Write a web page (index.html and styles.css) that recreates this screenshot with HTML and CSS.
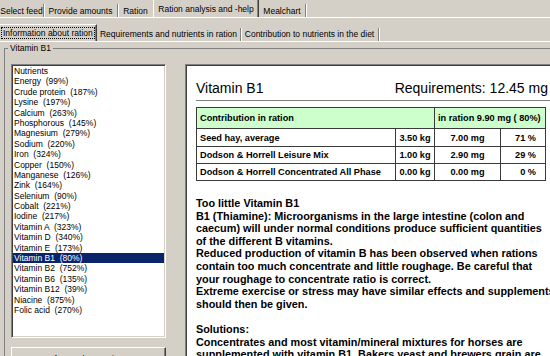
FILE: index.html
```html
<!DOCTYPE html>
<html>
<head>
<meta charset="utf-8">
<title>Ration analysis</title>
<link rel="stylesheet" href="styles.css">
</head>
<body>
<div class="app">
  <div class="tabs top">
    <div class="tab t1">Select feed</div>
    <div class="tab t2">Provide amounts</div>
    <div class="tab t3">Ration</div>
    <div class="tab sel t4">Ration analysis and -help</div>
    <div class="tab t5">Mealchart</div>
  </div>
  <div class="tabs sub">
    <div class="tab sel s1"><span class="focus">Information about ration</span></div>
    <div class="tab s2">Requirements and nutrients in ration</div>
    <div class="tab s3">Contribution to nutrients in the diet</div>
  </div>
  <fieldset class="group">
    <legend>Vitamin B1</legend>
    <div class="inner">
      <div class="left">
        <ul class="list">
          <li>Nutrients</li>
          <li>Energy  (99%)</li>
          <li>Crude protein  (187%)</li>
          <li>Lysine  (197%)</li>
          <li>Calcium  (263%)</li>
          <li>Phosphorous  (145%)</li>
          <li>Magnesium  (279%)</li>
          <li>Sodium  (220%)</li>
          <li>Iron  (324%)</li>
          <li>Copper  (150%)</li>
          <li>Manganese  (126%)</li>
          <li>Zink  (164%)</li>
          <li>Selenium  (90%)</li>
          <li>Cobalt  (221%)</li>
          <li>Iodine  (217%)</li>
          <li>Vitamin A  (323%)</li>
          <li>Vitamin D  (340%)</li>
          <li>Vitamin E  (173%)</li>
          <li class="on">Vitamin B1  (80%)</li>
          <li>Vitamin B2  (752%)</li>
          <li>Vitamin B6  (135%)</li>
          <li>Vitamin B12  (39%)</li>
          <li>Niacine  (875%)</li>
          <li>Folic acid  (270%)</li>
        </ul>
        <button class="btn">Info on other nutrients</button>
      </div>
      <div class="panel">
        <div class="doc">
          <div class="title"><span>Vitamin B1</span><span>Requirements: 12.45 mg</span></div>
          <div class="rule"></div>
          <table class="contrib">
            <colgroup><col class="c1"><col class="c2"><col class="c3"><col class="c4"></colgroup>
            <tr class="head"><td colspan="2">Contribution in ration</td><td colspan="2">in ration 9.90 mg ( 80%)</td></tr>
            <tr class="r1"><td>Seed hay, average</td><td class="ctr">3.50 kg</td><td class="ctr">7.00 mg</td><td class="pct">71 %</td></tr>
            <tr><td>Dodson &amp; Horrell Leisure Mix</td><td class="ctr">1.00 kg</td><td class="ctr">2.90 mg</td><td class="pct">29 %</td></tr>
            <tr><td>Dodson &amp; Horrell Concentrated All Phase</td><td class="ctr">0.00 kg</td><td class="ctr">0.00 mg</td><td class="pct">0 %</td></tr>
          </table>
          <p class="info">Too little Vitamin B1<br>B1 (Thiamine): Microorganisms in the large intestine (colon and<br>caecum) will under normal conditions produce sufficient quantities<br>of the different B vitamins.<br>Reduced production of vitamin B has been observed when rations<br>contain too much concentrate and little roughage. Be careful that<br>your roughage to concentrate ratio is correct.<br>Extreme exercise or stress may have similar effects and supplements<br>should then be given.<br><br>Solutions:<br>Concentrates and most vitamin/mineral mixtures for horses are<br>supplemented with vitamin B1. Bakers yeast and brewers grain are</p>
        </div>
      </div>
    </div>
  </fieldset>
</div>
</body>
</html>
```

FILE: styles.css
```css
* { box-sizing: border-box; }
html, body { margin: 0; padding: 0; }
body {
  width: 550px;
  height: 356px;
  overflow: hidden;
  background: #d4d0c8;
  font-family: "Liberation Sans", Arial, sans-serif;
  font-size: 8.5px;
  color: #000;
}
.app { width: 550px; height: 356px; overflow: hidden; }

/* tab rows */
.tabs { display: flex; border-bottom: 1px solid #fff; }
.tabs.top { height: 18px; }
.tabs.sub { height: 24px; }
.tab {
  text-align: center;
  line-height: 10px;
  white-space: nowrap;
  border-right: 1px solid #808080;
  box-shadow: 1px 0 0 #fff;
}
.tabs.top .tab { margin-top: 4px; height: 13px; padding-top: 2px; }
.tabs.top .tab.sel {
  margin-top: 0;
  height: 17px;
  padding-top: 3.5px;
  border-left: 1px solid #fff;
  border-right: 1px solid #404040;
  box-shadow: inset -1px 0 0 #808080;
}
.t1 { width: 44px; }
.t2 { width: 74px; }
.t3 { width: 35px; border-right: none !important; box-shadow: none !important; }
.t4 { width: 106px; }
.t5 { width: 47px; }

.tabs.sub .tab { margin-top: 10px; height: 13px; padding-top: 1px; }
.tabs.sub .tab.sel {
  margin-top: 6px;
  height: 17px;
  padding-top: 2px;
  border-top: 1px solid #fff;
  border-right: 1px solid #404040;
  box-shadow: inset -1px 0 0 #808080;
}
.s1 { width: 97px; text-align: left; padding-left: 1px; }
.s2 { width: 144px; }
.s3 { width: 138px; }
.focus { display: inline-block; border: 1px dotted #000; padding: 0 1px; line-height: 10px; }

/* group box */
.group {
  margin: 1px 0 0 4px;
  padding: 0 0 0 6px;
  border: none;
  border-top: 1px solid #808080;
  border-left: 1px solid #808080;
  min-width: 0;
  height: 330px;
}
.group legend {
  padding: 0 2px;
  margin-left: -3px;
  line-height: 11px;
}
.inner { display: flex; gap: 19px; margin-top: 10px; }
.left { width: 155px; flex: none; }
.list {
  list-style: none;
  margin: 0;
  padding: 1px;
  height: 274px;
  background: #fff;
  border: 1px solid;
  border-color: #808080 #fff #fff #808080;
  box-shadow: inset 1px 1px 0 #404040, inset -1px -1px 0 #d4d0c8;
  overflow: hidden;
}
.list li {
  white-space: pre;
  line-height: 10.4px;
  height: 10.4px;
  padding-left: 1px;
}
.list li.on { background: #0a246a; color: #fff; }
.btn {
  display: block;
  margin-top: 9px;
  width: 155px;
  height: 23px;
  padding: 2px 0 0;
  font: inherit;
  line-height: 11px;
  background: #d4d0c8;
  border: 1px solid;
  border-color: #fff #404040 #404040 #fff;
  box-shadow: inset -1px -1px 0 #808080;
  text-align: center;
  vertical-align: top;
}

/* document panel */
.panel {
  flex: none;
  width: 380px;
  height: 300px;
  background: #fff;
  border-top: 1px solid #808080;
  border-left: 1px solid #808080;
  box-shadow: inset 1px 1px 0 #404040;
  overflow: hidden;
}
.doc { padding: 15px 0 0 10px; }
.title {
  display: flex;
  justify-content: space-between;
  width: 352px;
  font-size: 14px;
  line-height: 16px;
}
.rule { margin-top: 4px; height: 1px; width: 370px; background: #808080; }
.contrib {
  margin-top: 6px;
  width: 349px;
  border-collapse: collapse;
  table-layout: fixed;
  font-size: 9.2px;
  font-weight: bold;
}
.c1 { width: 199px; }
.c2 { width: 39px; }
.c3 { width: 66px; }
.c4 { width: 45px; }
.contrib td {
  border: 1px solid #3a3a3a;
  padding: 0 3px;
  height: 17px;
  white-space: nowrap;
}
.contrib tr.head td { background: #ccffcc; height: 21px; }
.contrib tr.r1 td { height: 18px; }
.contrib td.ctr { text-align: center; padding: 0; }
.contrib td.pct { text-align: right; padding-right: 9px; }
.info {
  margin: 16px 0 0;
  font-size: 10.85px;
  font-weight: bold;
  line-height: 12.6px;
  white-space: nowrap;
}
```
